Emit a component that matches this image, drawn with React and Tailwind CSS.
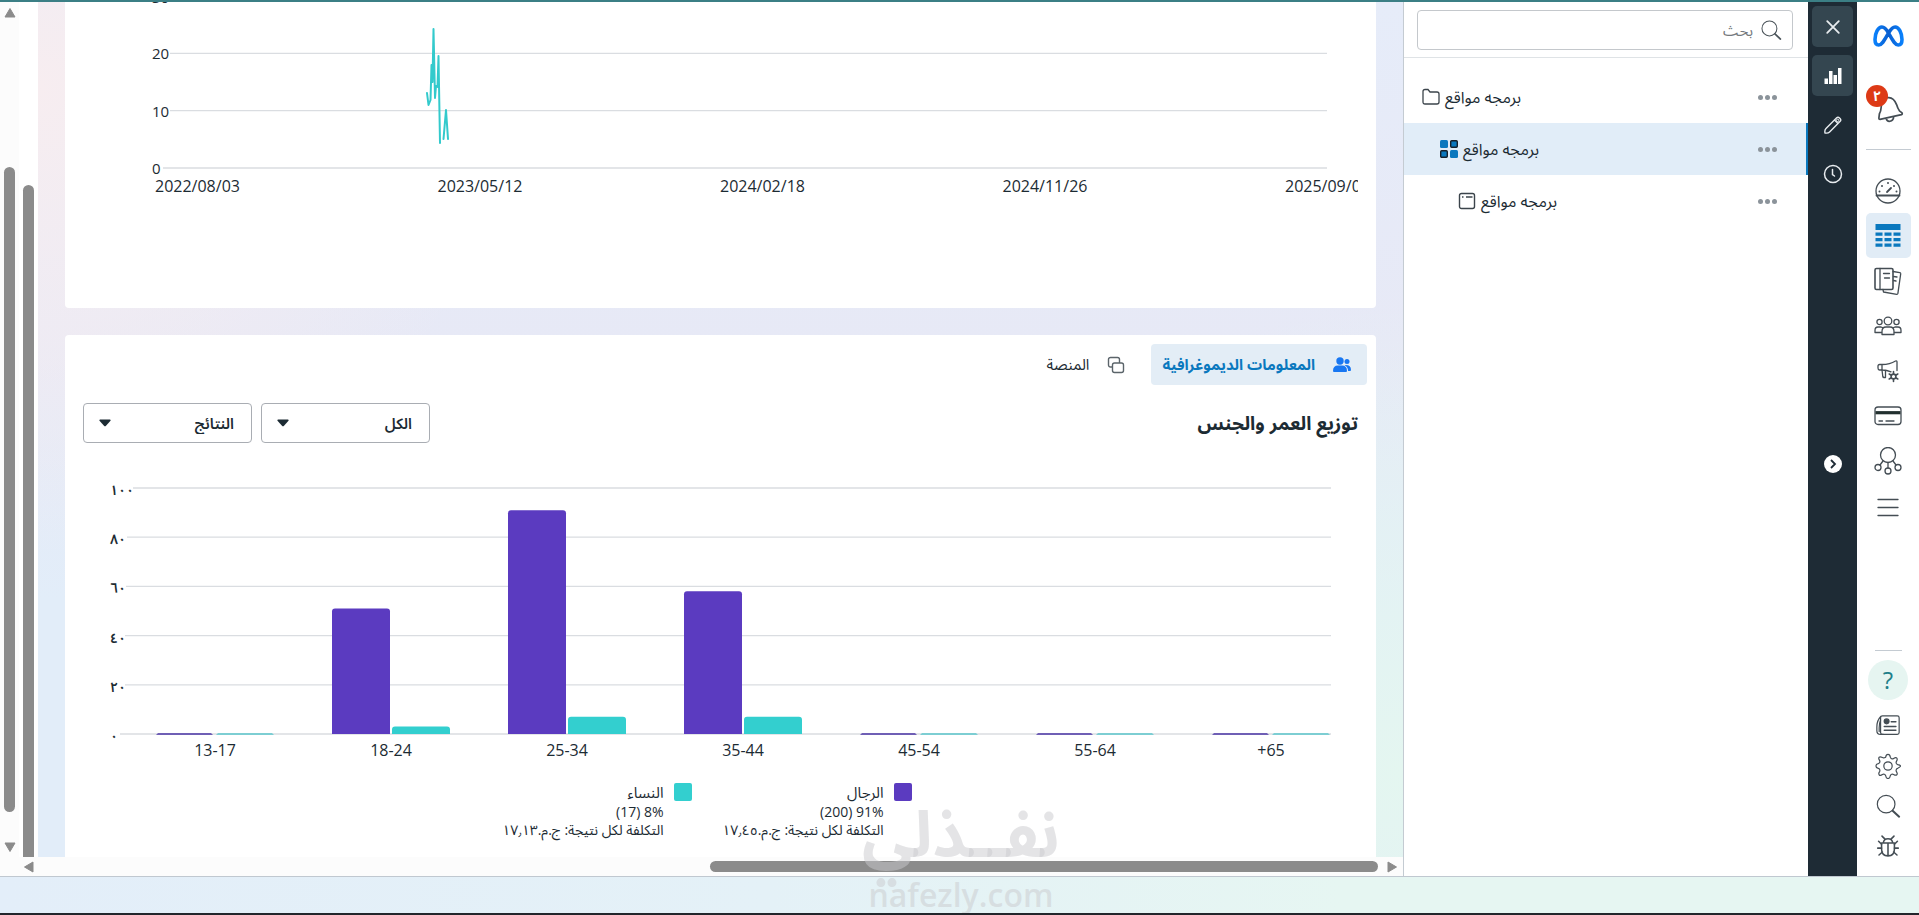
import React from 'react'

const treeRows = [
  { id: 'campaign', label: 'برمجه مواقع', icon: 'folder', pad: 'pl-[18px]', active: false },
  { id: 'adset', label: 'برمجه مواقع', icon: 'grid', pad: 'pl-9', active: true },
  { id: 'ad', label: 'برمجه مواقع', icon: 'page', pad: 'pl-[54px]', active: false }
]

const ages = [
  { label: '13-17', men: 0, women: 0 },
  { label: '18-24', men: 51, women: 3 },
  { label: '25-34', men: 91, women: 7 },
  { label: '35-44', men: 58, women: 7 },
  { label: '45-54', men: 0, women: 0 },
  { label: '55-64', men: 0, women: 0 },
  { label: '+65', men: 0, women: 0 }
]

const ageTicks = [
  { value: 100, label: '١٠٠', start: 68 },
  { value: 80, label: '٨٠', start: 62 },
  { value: 60, label: '٦٠', start: 61 },
  { value: 40, label: '٤٠', start: 60 },
  { value: 20, label: '٢٠', start: 60 },
  { value: 0, label: '٠', start: 55 }
]

const dates = ['2022/08/03', '2023/05/12', '2024/02/18', '2024/11/26', '2025/09/03']

const legend = [
  { name: 'الرجال', color: 'bg-[#5b3bc0]', share: '(200) 91%', cost: 'التكلفة لكل نتيجة: ج.م.١٧٫٤٥' },
  { name: 'النساء', color: 'bg-[#33cfcf]', share: '(17) 8%', cost: 'التكلفة لكل نتيجة: ج.م.١٧٫١٣' }
]

const Icon = ({ size = 'size-7', children, ...rest }) => (
  <svg
    viewBox='0 0 28 28'
    className={`${size} shrink-0`}
    fill='none'
    stroke='currentColor'
    strokeWidth='1.3'
    strokeLinecap='round'
    strokeLinejoin='round'
    aria-hidden='true'
    {...rest}
  >
    {children}
  </svg>
)

const MetaLogo = () => (
  <svg viewBox='0 0 31 22' className='h-[22px] w-[31px]' fill='none' aria-hidden='true'>
    <defs>
      <linearGradient id='meta' x1='0' x2='1' y1='0' y2='0'>
        <stop offset='0' stopColor='#0a80fb' />
        <stop offset='0.5' stopColor='#0a5fd0' />
        <stop offset='1' stopColor='#0a80fb' />
      </linearGradient>
    </defs>
    <path
      d='M15.500 8C13.200 4 11.400 2 8.900 2 5 2 2 8 2 14.500c0 3.500 1.300 5.500 3.700 5.500 2.900 0 4.800-3 9.800-12C18 3.800 19.600 2 22.100 2 26 2 29 8 29 14.500c0 3.500-1.300 5.500-3.700 5.500-2.900 0-4.800-3-9.800-12z'
      stroke='url(#meta)'
      strokeWidth='3.600'
      strokeLinejoin='round'
    />
  </svg>
)

const SearchIcon = ({ size }) => (
  <Icon size={size}>
    <circle cx='12' cy='12' r='9.500' />
    <path d='M19 19l7 6.500' strokeWidth='2.200' />
  </Icon>
)

const FolderIcon = () => (
  <svg viewBox='0 0 18 18' className='size-[18px]' fill='none' stroke='#3b444b' strokeWidth='1.3' aria-hidden='true'>
    <path d='M1 3.500q0-2 2-2h3l2 2.500h7q2 0 2 2v8q0 2-2 2H3q-2 0-2-2z' />
  </svg>
)

const GridIcon = () => (
  <svg viewBox='0 0 18 18' className='size-[18px]' fill='#0a78be' aria-hidden='true'>
    <rect x='0' y='0' width='8' height='8' rx='1.500' />
    <rect x='10.700' y='0.700' width='6.600' height='6.600' rx='1' stroke='#15202b' strokeWidth='1.400' />
    <rect x='0.700' y='10.700' width='6.600' height='6.600' rx='1' stroke='#15202b' strokeWidth='1.400' />
    <rect x='10' y='10' width='8' height='8' rx='1.500' />
  </svg>
)

const PageIcon = () => (
  <svg viewBox='0 0 18 18' className='size-[18px]' fill='none' stroke='#3b444b' strokeWidth='1.400' aria-hidden='true'>
    <rect x='1.500' y='1.500' width='15' height='15' rx='2' />
    <path d='M4 5h1.500M8 5h6.500' />
  </svg>
)

const rowIcons = { folder: FolderIcon, grid: GridIcon, page: PageIcon }

const mainNav = [
  {
    name: 'لوحة المعلومات',
    icon: (
      <Icon>
        <circle cx='14' cy='14' r='12' />
        <path d='M2.500 18.500h23' strokeWidth='1.800' />
        <path d='M13 15l4-4' strokeWidth='1.800' />
        <g fill='currentColor' stroke='none'>
          <circle cx='5.500' cy='14.500' r='1' />
          <circle cx='8' cy='9' r='1' />
          <circle cx='14' cy='6' r='1' />
          <circle cx='20' cy='9' r='1' />
          <circle cx='22.500' cy='14.500' r='1' />
        </g>
      </Icon>
    )
  },
  {
    name: 'الحملات',
    active: true,
    icon: (
      <Icon fill='#0a78be' stroke='none'>
        <rect x='1.500' y='2' width='25' height='6' />
        <path d='M1.500 10.500h7v3.300h-7zM10.500 10.500h7v3.300h-7zM19.500 10.500h7v3.300h-7zM1.500 16h7v3.300h-7zM10.500 16h7v3.300h-7zM19.500 16h7v3.300h-7zM1.500 21.500h7v3.300h-7zM10.500 21.500h7v3.300h-7zM19.500 21.500h7v3.300h-7z' />
      </Icon>
    )
  },
  {
    name: 'التقارير',
    icon: (
      <Icon>
        <rect x='1' y='1.500' width='18' height='21' rx='1.500' strokeWidth='1.600' />
        <path d='M6 1.500v21M9.500 6.500h6M10.500 11h5' />
        <path d='M19 4.500l6.800 1.200q1 .2.900 1.200l-2.800 19.500q-.2 1-1.200.9L9.500 25l-.5-2.500M19.500 9.500l3.500.5M19.500 13.500l2.500.5' />
      </Icon>
    )
  },
  {
    name: 'الجماهير',
    icon: (
      <Icon>
        <circle cx='14' cy='9' r='3.800' />
        <circle cx='5.500' cy='10' r='2.600' />
        <circle cx='22.500' cy='10' r='2.600' />
        <path d='M8 22.500v-3q0-4.500 4-4.500h4q4 0 4 4.500v3z' />
        <path d='M7.500 20.500H1v-2q0-3.500 3-3.500h3l1.500.7M20.500 20.500H27v-2q0-3.500-3-3.500h-3l-1.500.7' />
      </Icon>
    )
  },
  {
    name: 'إعدادات الإعلانات',
    icon: (
      <Icon>
        <path d='M8 7.500H5.500Q4 7.500 4 9v2q0 2 1.500 2H8zM8 7.500q8 0 13.500-3.500 1.500-.5 1.500 1v8.500M8 13q5 0 9 1.800' />
        <path d='M8 13l.8 6.500q.2 1 1.200 1h1.500V13.500' />
        <path d='M19.500 14.500v10M15.200 17l8.600 5M15.200 22l8.600-5' strokeWidth='1.600' />
        <circle cx='19.500' cy='19.500' r='2.400' fill='#fff' strokeWidth='1.600' />
      </Icon>
    )
  },
  {
    name: 'الفوترة',
    icon: (
      <Icon>
        <rect x='1' y='5' width='26' height='17.500' rx='3' />
        <path d='M1.500 10.700h25' stroke='#22302f' strokeWidth='3.200' strokeLinecap='butt' />
        <path d='M5 19h3.500M12 19h8' />
      </Icon>
    )
  },
  {
    name: 'الأحداث',
    icon: (
      <Icon>
        <circle cx='14' cy='8' r='7.500' />
        <circle cx='4' cy='20.500' r='3' />
        <circle cx='14' cy='24' r='3' />
        <circle cx='24' cy='20.500' r='3' />
        <path d='M9 14l-3 4M14 15.500V21M19 14l3 4' />
      </Icon>
    )
  },
  {
    name: 'كل الأدوات',
    icon: (
      <Icon>
        <path d='M4 7.500h20M4 15.500h20M4 23.500h20' />
      </Icon>
    )
  }
]

const footerNav = [
  {
    name: 'الأخبار',
    icon: (
      <Icon size='size-[26px]'>
        <rect x='6' y='3' width='20' height='20' rx='2' />
        <path d='M6 4Q2 8 2 15v4q0 4 4 4h3M6 7.500Q4.500 11 4.500 16v4' />
        <circle cx='12.500' cy='9' r='2.600' fill='currentColor' />
        <path d='M17.500 9.500h5M10 14.500h12.500M10 18.500h12.500' strokeWidth='1.600' />
      </Icon>
    )
  },
  {
    name: 'الإعدادات',
    icon: (
      <Icon size='size-[26px]'>
        <circle cx='14' cy='14' r='4.500' />
        <path d='M11.500 4.500Q12 1.500 14 1.500t2.500 3q.3 1.200 1.400 1.700 1.100.4 2.100-.3 2.500-1.500 3.500-.4t-.4 3.500q-.6 1-.2 2.100.5 1.100 1.600 1.400 3 .500 3 1.500t-3 2.500q-1.200.3-1.600 1.400t.2 2.100q1.500 2.500.4 3.500t-3.500-.4q-1-.6-2.100-.2t-1.400 1.600q-.5 3-2.500 3t-2.500-3q-.3-1.200-1.400-1.600t-2.100.2Q5.500 25 4.500 23.500t.4-3.500q.6-1 .2-2.100t-1.600-1.400q-2.500-.5-2.500-2.500t2.500-2.500q1.200-.3 1.600-1.400t-.2-2.100Q3.400 5.500 4.500 4.500t3.500.4q1 .6 2.100.2t1.400-.600z' />
      </Icon>
    )
  },
  { name: 'بحث', icon: <SearchIcon size='size-[26px]' /> },
  {
    name: 'الإبلاغ عن مشكلة',
    icon: (
      <Icon size='size-6' strokeWidth='1.800'>
        <path d='M6.500 10.500h15v7q0 8-7.500 8t-7.500-8zM14 10.500v15M8.500 10q1-4.500 5.500-4.500t5.500 4.500' />
        <path d='M10.500 6L7 2.500M17.500 6L21 2.500M6.500 12L3 8.500M21.500 12L25 8.500M6.500 16.500H2M21.500 16.500H26M7.500 21L3.500 24.500M20.500 21l4 3.500' />
      </Icon>
    )
  }
]

const Triangle = ({ dir }) => {
  const paths = {
    up: 'M6 1.500L11 10H1z',
    down: 'M6 10.500L1 2h10z',
    left: 'M1.500 6L10 1v10z',
    right: 'M10.500 6L2 1v10z'
  }
  return (
    <svg viewBox='0 0 12 12' className='size-3 shrink-0' fill='#8b8b8b' stroke='#8b8b8b' strokeLinejoin='round' aria-hidden='true'>
      <path d={paths[dir]} />
    </svg>
  )
}

const ResultsChart = () => {
  const y = v => 166 - v * 5.73
  return (
    <svg viewBox='0 0 1311 306' className='block w-full' fontSize='15' fill='#1c2b33' role='img' aria-label='النتائج'>
      {[0, 10, 20].map(v => (
        <g key={v}>
          <line x1={v ? 105 : 98} x2='1262' y1={y(v)} y2={y(v)} stroke='#dadde1' strokeWidth='1.3' />
          <text x='87' y={y(v) + 6}>{v}</text>
        </g>
      ))}
      <text x='87' y='1'>30</text>
      <g fill='none' stroke='#33cacc' strokeWidth='2' strokeLinejoin='round' strokeLinecap='round'>
        <path d='M362 91l1.500 12 2-5 1-35 1 17 1-53 1.500 69 1-12 1.500 1 1-31 1.500 87' />
        <path d='M378.500 137l2.500-29 2 29' />
      </g>
      {dates.map((d, i) => (
        <text key={d} x={90 + i * 282.5} y='190' fontSize='16'>{d}</text>
      ))}
      <rect x='1293' y='172' width='18' height='26' fill='#fff' />
    </svg>
  )
}

// rounded top corners only
const bar = (x, top, base) =>
  `M${x} ${base}V${top + 3}q0-3 3-3h52q3 0 3 3V${base}z`

const AgeChart = () => {
  const base = 274
  const y = v => base - v * 2.46
  return (
    <svg viewBox='0 0 1311 310' className='block w-full' fontSize='16' fill='#1c2b33' role='img' aria-label='توزيع العمر والجنس'>
      {ageTicks.map(t => (
        <g key={t.value}>
          <line x1={t.start} x2='1266' y1={y(t.value)} y2={y(t.value)} stroke='#dadde1' strokeWidth='1.3' />
          <text x='45' y={y(t.value) + 7} fontSize='14' fontWeight='600'>{t.label}</text>
        </g>
      ))}
      {ages.map((a, i) => {
        const x = 91 + i * 176
        return (
          <g key={a.label}>
            {a.men ? (
              <path d={bar(x, y(a.men), base)} fill='#5b3bc0' />
            ) : (
              <path d={`M${x} ${base + 1}l2-2h53l2 2z`} fill='#6f5fb5' />
            )}
            {a.women ? (
              <path d={bar(x + 60, y(a.women), base)} fill='#33cfcf' />
            ) : (
              <path d={`M${x + 60} ${base + 1}l2-2h54l2 2z`} fill='#7dced3' />
            )}
            <text x={x + 59} y='296' textAnchor='middle'>{a.label}</text>
          </g>
        )
      })}
    </svg>
  )
}

const Dropdown = ({ label, value }) => (
  <div className='relative w-[169px]'>
    <select
      aria-label={label}
      dir='rtl'
      className='h-10 w-full appearance-none rounded-[4px] border border-[#a9adb3] bg-white px-[17px] text-[15px] font-semibold text-[#1c2b33]'
    >
      <option>{value}</option>
    </select>
    <svg viewBox='0 0 12 8' className='pointer-events-none absolute top-4 left-4 h-2 w-3' fill='#1c2b33' aria-hidden='true'>
      <path d='M1 .5h10q1 .3.500 1.200L7 6.800q-1 1-2 0L.5 1.700Q0 .8 1 .5z' />
    </svg>
  </div>
)

const Demographics = () => (
  <section className='min-h-0 flex-1 overflow-hidden rounded-t bg-white'>
    <div dir='rtl' className='flex items-center px-[9px] pt-[9px]'>
      <button className='flex h-[41px] items-center gap-[18px] rounded-[4px] bg-[#e3edf6] pr-4 pl-[11px] text-[15px] font-bold text-[#0a78be]'>
        <svg viewBox='0 0 18 16' className='h-4 w-[18px]' fill='#1877f2' aria-hidden='true'>
          <circle cx='7' cy='4' r='3.700' />
          <circle cx='14' cy='4.500' r='2.500' />
          <path d='M0 14q0-5.500 5-5.500h4q5 0 5 5.500 0 1-1 1H1q-1 0-1-1zM11.500 8.200q6.500-.7 6.500 4.800 0 1-1 1h-2q.3-3.800-3.500-5.800z' />
        </svg>
        المعلومات الديموغرافية
      </button>
      <button className='flex h-[41px] items-center gap-[18px] px-[26px] text-[15px] text-[#1c2b33]'>
        <svg viewBox='0 0 18 18' className='size-[18px]' fill='#fff' stroke='#5b646a' strokeWidth='1.400' aria-hidden='true'>
          <rect x='1.500' y='1.500' width='11' height='9.500' rx='2' />
          <rect x='5.500' y='7' width='11' height='9.500' rx='2' />
        </svg>
        المنصة
      </button>
    </div>
    <div dir='rtl' className='mt-[18px] flex items-center justify-between px-[18px]'>
      <h2 className='text-[19px] leading-7 font-bold text-[#1c2b33]'>توزيع العمر والجنس</h2>
      <div className='flex gap-[9px]'>
        <Dropdown label='التقسيم' value='الكل' />
        <Dropdown label='المقياس' value='النتائج' />
      </div>
    </div>
    <div className='mt-[17px]'>
      <AgeChart />
    </div>
    <div dir='rtl' className='mt-3 flex justify-center pr-[58px]'>
      {legend.map(l => (
        <div key={l.name} className='flex w-[220px] gap-[10px]'>
          <span className={`mt-px size-[18px] shrink-0 rounded-[2px] ${l.color}`} />
          <div className='text-sm leading-[18px] whitespace-nowrap text-[#1c2b33]'>
            <p className='text-[15px] leading-[21px]'>{l.name}</p>
            <p dir='ltr' className='text-right'>{l.share}</p>
            <p>{l.cost}</p>
          </div>
        </div>
      ))}
    </div>
  </section>
)

const SidePanel = () => (
  <aside className='flex w-[405px] flex-col border-l border-[#c4cbd2] bg-white'>
    <div className='border-b border-[#dfe3e6] pt-2 pr-[15px] pb-[7px] pl-[13px]'>
      <label dir='rtl' className='flex h-10 items-center gap-[7px] rounded-[4px] border border-[#c4c8cc] px-[10px] text-[#4a5359]'>
        <SearchIcon size='size-[22px]' />
        <input
          type='text'
          aria-label='بحث'
          placeholder='بحث'
          className='min-w-0 flex-1 text-[15px] outline-none placeholder:text-[#75797d]'
        />
      </label>
    </div>
    <ul className='pt-[13px]'>
      {treeRows.map(row => {
        const RowIcon = rowIcons[row.icon]
        return (
          <li
            key={row.id}
            className={`flex h-[52px] items-center justify-between border-r-2 pr-[29px] ${row.pad} ${
              row.active ? 'border-[#0a78be] bg-[#e1edf8]' : 'border-transparent'
            }`}
          >
            <a href='#' className='flex items-center gap-[5px] text-base text-[#1c2b33]'>
              <RowIcon />
              <span dir='rtl'>{row.label}</span>
            </a>
            <button aria-label='المزيد' className='flex gap-[2px]'>
              <span className='size-[5px] rounded-full bg-[#8b939a]' />
              <span className='size-[5px] rounded-full bg-[#8b939a]' />
              <span className='size-[5px] rounded-full bg-[#8b939a]' />
            </button>
          </li>
        )
      })}
    </ul>
  </aside>
)

const Toolbar = () => (
  <div className='flex w-[49px] flex-col items-center bg-[#1e2b35] pt-1 text-[#e8ecef]'>
    <button aria-label='إغلاق' className='grid size-[41px] place-items-center rounded-[5px] bg-[#344650]'>
      <Icon size='size-[18px]' strokeWidth='2.800'>
        <path d='M5 5l18 18M23 5L5 23' />
      </Icon>
    </button>
    <button aria-label='الرسوم البيانية' className='mt-2 grid size-[41px] place-items-center rounded-[5px] bg-[#344650]'>
      <svg viewBox='0 0 18 18' className='size-[18px]' fill='#fff' aria-hidden='true'>
        <path d='M.5 11.500H4V17H.5zM5 4h3.500v13H5zM9.500 8H13v9H9.500zM14 1h3.500v16H14z' />
      </svg>
    </button>
    <button aria-label='تعديل' className='mt-2 grid size-[41px] place-items-center'>
      <svg viewBox='0 0 18 18' className='size-[18px]' fill='none' stroke='currentColor' strokeWidth='1.400' strokeLinejoin='round' aria-hidden='true'>
        <path d='M1 17q-.6-3 1-4.600L12.700 1.800Q14 .5 15.800 2.200T16.200 5.300L5.600 16q-1.600 1.600-4.600 1zM10.500 4L14 7.500' />
        <circle cx='13.600' cy='4.400' r='1.200' strokeWidth='1' />
      </svg>
    </button>
    <button aria-label='السجل' className='mt-2 grid size-[41px] place-items-center'>
      <svg viewBox='0 0 20 20' className='size-5' fill='none' stroke='currentColor' strokeWidth='1.500' strokeLinecap='round' aria-hidden='true'>
        <circle cx='10' cy='10' r='8.500' />
        <path d='M9.500 5.500v5l2 1.500' />
      </svg>
    </button>
    <button aria-label='توسيع' className='mt-[261px] grid size-[18px] place-items-center rounded-full bg-white text-[#1e2b35]'>
      <svg viewBox='0 0 10 10' className='size-[10px]' fill='none' stroke='currentColor' strokeWidth='1.800' aria-hidden='true'>
        <path d='M3 1l4 4-4 4' />
      </svg>
    </button>
  </div>
)

const IconRail = () => (
  <nav className='flex w-[62px] flex-col items-center bg-white text-[#444d54]'>
    <a href='#' aria-label='Meta' className='mt-[23px]'>
      <MetaLogo />
    </a>
    <button aria-label='الإشعارات' className='relative mt-[45px]'>
      <Icon size='size-8' strokeWidth='1.500'>
        <path d='M6 23L6.500 19Q7.800 17 8 13.500 8.300 6 13.500 5t8 6q1 3.500 2.500 5.500l2.300 1.800q.5 1-.5 1.500L7 24q-1 0-1-1zM12.500 23q.500 3 3.300 2.600t3.200-3.800' />
      </Icon>
      <span className='absolute -top-[7px] -left-[6px] grid size-[22px] place-items-center rounded-full bg-[#dd3a16] text-sm leading-none font-bold text-white'>
        ٢
      </span>
    </button>
    <span className='mt-[25px] h-px w-[45px] bg-[#c4cbd2]' />
    <div className='mt-[18px] flex flex-col'>
      {mainNav.map(item => (
        <a
          key={item.name}
          href='#'
          aria-label={item.name}
          className={`grid size-[45px] place-items-center rounded-[5px] ${item.active ? 'bg-[#e1ecf6]' : ''}`}
        >
          {item.icon}
        </a>
      ))}
    </div>
    <span className='mt-auto h-px w-[27px] bg-[#c4cbd2]' />
    <a
      href='#'
      aria-label='المساعدة'
      className='mt-[9px] grid size-10 place-items-center rounded-full bg-[#e6f5f1] text-2xl leading-none text-[#1f7f8a]'
    >
      ?
    </a>
    <div className='mt-[6px] mb-[10px] flex flex-col'>
      {footerNav.map(item => (
        <a key={item.name} href='#' aria-label={item.name} className='grid h-10 w-[45px] place-items-center'>
          {item.icon}
        </a>
      ))}
    </div>
  </nav>
)

const App = () => {
  return (
    <div className="relative flex h-screen flex-col overflow-hidden border-t-2 border-b-2 border-t-[#3b7f85] border-b-[#22252b] bg-[linear-gradient(90deg,#e3eef9,#e4f1f7_40%,#e6f6f2_70%)] font-['Open_Sans','Noto_Sans','Noto_Sans_Arabic','DejaVu_Sans',sans-serif]">
      <div className='flex min-h-0 flex-1 border-b border-[#c0c8d0] bg-white'>
        {/* outer page scrollbar */}
        <div className='flex w-[19px] flex-col items-center bg-[#fcfcfc] pt-[5px] pb-[23px]'>
          <Triangle dir='up' />
          <div className='mt-[148px] mb-[29px] w-[11px] flex-1 rounded-full bg-[#8b8b8b]' />
          <Triangle dir='down' />
        </div>
        <main className='flex min-w-0 flex-1 flex-col'>
          <div className='flex min-h-0 flex-1'>
            <div className='flex w-[19px] justify-center pt-[183px]'>
              <div className='w-[11px] rounded-t-full bg-[#8b8b8b]' />
            </div>
            <div className='flex min-w-0 flex-1 flex-col gap-[27px] bg-[radial-gradient(circle_at_0_10%,#f7edf0,transparent_30%),radial-gradient(circle_at_100%_90%,#e4f6f0,transparent_30%),linear-gradient(180deg,#e6ecf9,#e7e9f6_40%,#e2edf9_70%)] px-[27px]'>
              <section className='shrink-0 overflow-hidden rounded-b bg-white'>
                <ResultsChart />
              </section>
              <Demographics />
            </div>
          </div>
          <div className='flex h-[19px] items-center justify-between bg-[#fcfcfc] pr-[5px] pl-1'>
            <Triangle dir='left' />
            <div className='mr-2 ml-auto h-[11px] w-[48.6%] rounded-full bg-[#8b8b8b]' />
            <Triangle dir='right' />
          </div>
        </main>
        <SidePanel />
        <Toolbar />
        <IconRail />
      </div>
      <footer className='h-9 shrink-0' />
      <div className='pointer-events-none absolute bottom-0 left-[44.5%] flex w-[214px] flex-col items-center font-bold text-[#c9cacd]/50'>
        <span dir='rtl' className='mb-2 text-[64px] leading-[72px]'>نفــذلي</span>
        <span className='text-[32px] leading-[36px] font-semibold'>nafezly.com</span>
      </div>
    </div>
  )
}

export default App
